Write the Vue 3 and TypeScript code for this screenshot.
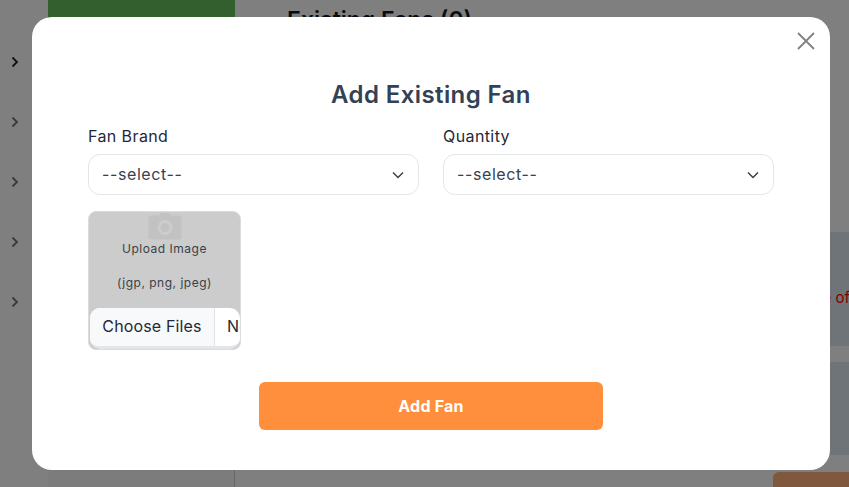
<script setup lang="ts">
const chevrons = [0, 1, 2, 3, 4]
</script>

<template>
  <div class="page">
    <aside class="rail">
      <svg v-for="c in chevrons" :key="c" class="rail-chev" :class="{ active: c === 0 }" viewBox="0 0 8 12" width="8" height="12">
        <path d="M1.5 1.5 6 6l-4.500 4.500" fill="none" stroke="currentColor" stroke-width="1.800" />
      </svg>
    </aside>
    <div class="side"><div class="green"></div></div>
    <main class="main">
      <h2 class="existing">Existing Fans (0)</h2>
      <div class="main-spacer"></div>
      <div class="panel first"><span class="warn">No fans available because of</span></div>
      <div class="panel second"></div>
      <div class="cta-row"><div class="cta"></div></div>
    </main>

    <div class="overlay">
      <div class="modal">
        <button class="close" aria-label="Close">
          <svg viewBox="0 0 18 18" width="18" height="18">
            <path d="M1 1l16 16M17 1 1 17" fill="none" stroke="#808080" stroke-width="1.800" />
          </svg>
        </button>
        <h1 class="title">Add Existing Fan</h1>
        <div class="fields">
          <div class="field">
            <label>Fan Brand</label>
            <div class="select">
              <span>--select--</span>
              <svg viewBox="0 0 12 8" width="12" height="8"><path d="M1 1.500 6 6.500l5-5" fill="none" stroke="#374151" stroke-width="1.500" /></svg>
            </div>
          </div>
          <div class="field">
            <label>Quantity</label>
            <div class="select">
              <span>--select--</span>
              <svg viewBox="0 0 12 8" width="12" height="8"><path d="M1 1.500 6 6.500l5-5" fill="none" stroke="#374151" stroke-width="1.500" /></svg>
            </div>
          </div>
        </div>
        <div class="upload">
          <svg class="camera" viewBox="0 0 34 28" width="34" height="28">
            <path fill-rule="evenodd" fill="#c2c2c2" d="M11 3.500 13 1h8l2 2.500h8a2.500 2.500 0 0 1 2.500 2.500v19a2.500 2.500 0 0 1-2.500 2.500H3A2.500 2.500 0 0 1 .5 25V6A2.500 2.500 0 0 1 3 3.500zM17 8a7.500 7.500 0 1 0 0 15 7.500 7.500 0 0 0 0-15zm0 3a4.500 4.500 0 1 1 0 9 4.500 4.500 0 0 1 0-9z" />
          </svg>
          <p class="up-a">Upload Image</p>
          <p class="up-b">(jgp, png, jpeg)</p>
          <div class="file">
            <span class="choose">Choose Files</span>
            <span class="none">No file chosen</span>
          </div>
        </div>
        <div class="actions"><button class="add">Add Fan</button></div>
      </div>
    </div>
  </div>
</template>

<style>
html, body { margin: 0; padding: 0; }
</style>

<style scoped>
* { box-sizing: border-box; }
.page {
  position: relative;
  width: 849px;
  height: 487px;
  overflow: hidden;
  display: flex;
  background: #fff;
  font-family: Inter, "Open Sans", "Liberation Sans", sans-serif;
}
.rail {
  width: 48px;
  flex: none;
  padding-top: 56px;
  padding-left: 11px;
  display: flex;
  flex-direction: column;
  gap: 48px;
  color: #6b7280;
}
.rail-chev.active { color: #0f2440; }
.side { width: 187px; flex: none; background: #f8f8f8; border-right: 1px solid #c9ccd1; }
.green { height: 120px; background: #66bc5c; margin-right: -1px; }
.main { flex: 1; padding-left: 52px; display: flex; flex-direction: column; min-width: 0; }
.main > * { flex: none; }
.existing {
  margin: 5px 0 0;
  font-size: 23px;
  line-height: 30px;
  font-weight: 600;
  color: #111827;
  white-space: nowrap;
}
.main-spacer { height: 197px; }
.panel { background: #dfe8f2; margin-left: -52px; height: 114px; }
.panel.first { display: flex; align-items: center; justify-content: flex-end; overflow: hidden; padding-top: 16px; }
.warn { color: #ff0000; font-size: 15px; white-space: nowrap; margin-right: -1px; }
.panel.second { margin-top: 16px; height: 93px; }
.cta-row { display: flex; justify-content: flex-end; padding-top: 17px; }
.cta { width: 76px; height: 40px; background: #ffb07c; border-radius: 6px 0 0 0; }

.overlay {
  position: absolute;
  inset: 0;
  background: rgba(0, 0, 0, 0.5);
  padding: 17px 19px 17px 32px;
}
.modal {
  position: relative;
  width: 798px;
  height: 453px;
  background: #fff;
  border-radius: 20px;
  padding: 60px 56px 0;
}
.close {
  position: absolute;
  top: 15px;
  right: 15px;
  padding: 0;
  border: 0;
  background: none;
  display: flex;
}
.title {
  margin: 0;
  height: 36px;
  line-height: 36px;
  text-align: center;
  font-size: 24px;
  font-weight: 600;
  letter-spacing: 0.4px;
  color: #334155;
}
.fields {
  display: grid;
  grid-template-columns: 331px 331px;
  column-gap: 24px;
  margin-top: 11px;
}
.field label {
  display: block;
  font-size: 16px;
  line-height: 24px;
  letter-spacing: 0.4px;
  color: #1f2937;
  margin-bottom: 6px;
}
.select {
  height: 41px;
  border: 1px solid #e2e5e9;
  border-radius: 12px;
  padding: 0 14px 2px 13px;
  display: flex;
  align-items: center;
  justify-content: space-between;
  font-size: 16px;
  letter-spacing: 0.6px;
  color: #374151;
}
.select svg { margin-top: 2px; }
.upload {
  position: relative;
  margin-top: 16px;
  width: 153px;
  height: 139px;
  background: #cccccc;
  border: 1px solid #dcdcdc;
  border-radius: 8px;
  overflow: hidden;
  display: flex;
  flex-direction: column;
  align-items: center;
}
.camera { margin-top: 0; flex: none; }
.up-a, .up-b {
  margin: 0;
  font-size: 12px;
  line-height: 18px;
  letter-spacing: 0.5px;
  color: #3a3f47;
  white-space: nowrap;
}
.up-a { margin-top: 0; }
.up-b { margin-top: 16px; }
.file {
  position: absolute;
  left: 1px;
  right: 0;
  bottom: 0;
  height: 41px;
  background: #fff;
  border-bottom: 3px solid #e2e5e9;
  border-radius: 10px;
  overflow: hidden;
  display: flex;
  align-items: center;
  font-size: 16px;
  letter-spacing: 0.15px;
  color: #1f2937;
  white-space: nowrap;
}
.choose {
  flex: none;
  width: 125px;
  height: 100%;
  padding-bottom: 2px;
  background: #f7f9fb;
  border-right: 1px solid #e0e3e7;
  display: flex;
  align-items: center;
  justify-content: center;
}
.none { padding: 0 0 2px 12px; }
.actions { display: flex; justify-content: center; margin-top: 32px; }
.add {
  width: 344px;
  height: 48px;
  padding: 0 0 1px;
  border: 0;
  border-radius: 6px;
  background: #ff8f3c;
  color: #fff;
  font-family: inherit;
  font-size: 16px;
  font-weight: 700;
  letter-spacing: 0.2px;
}
</style>
